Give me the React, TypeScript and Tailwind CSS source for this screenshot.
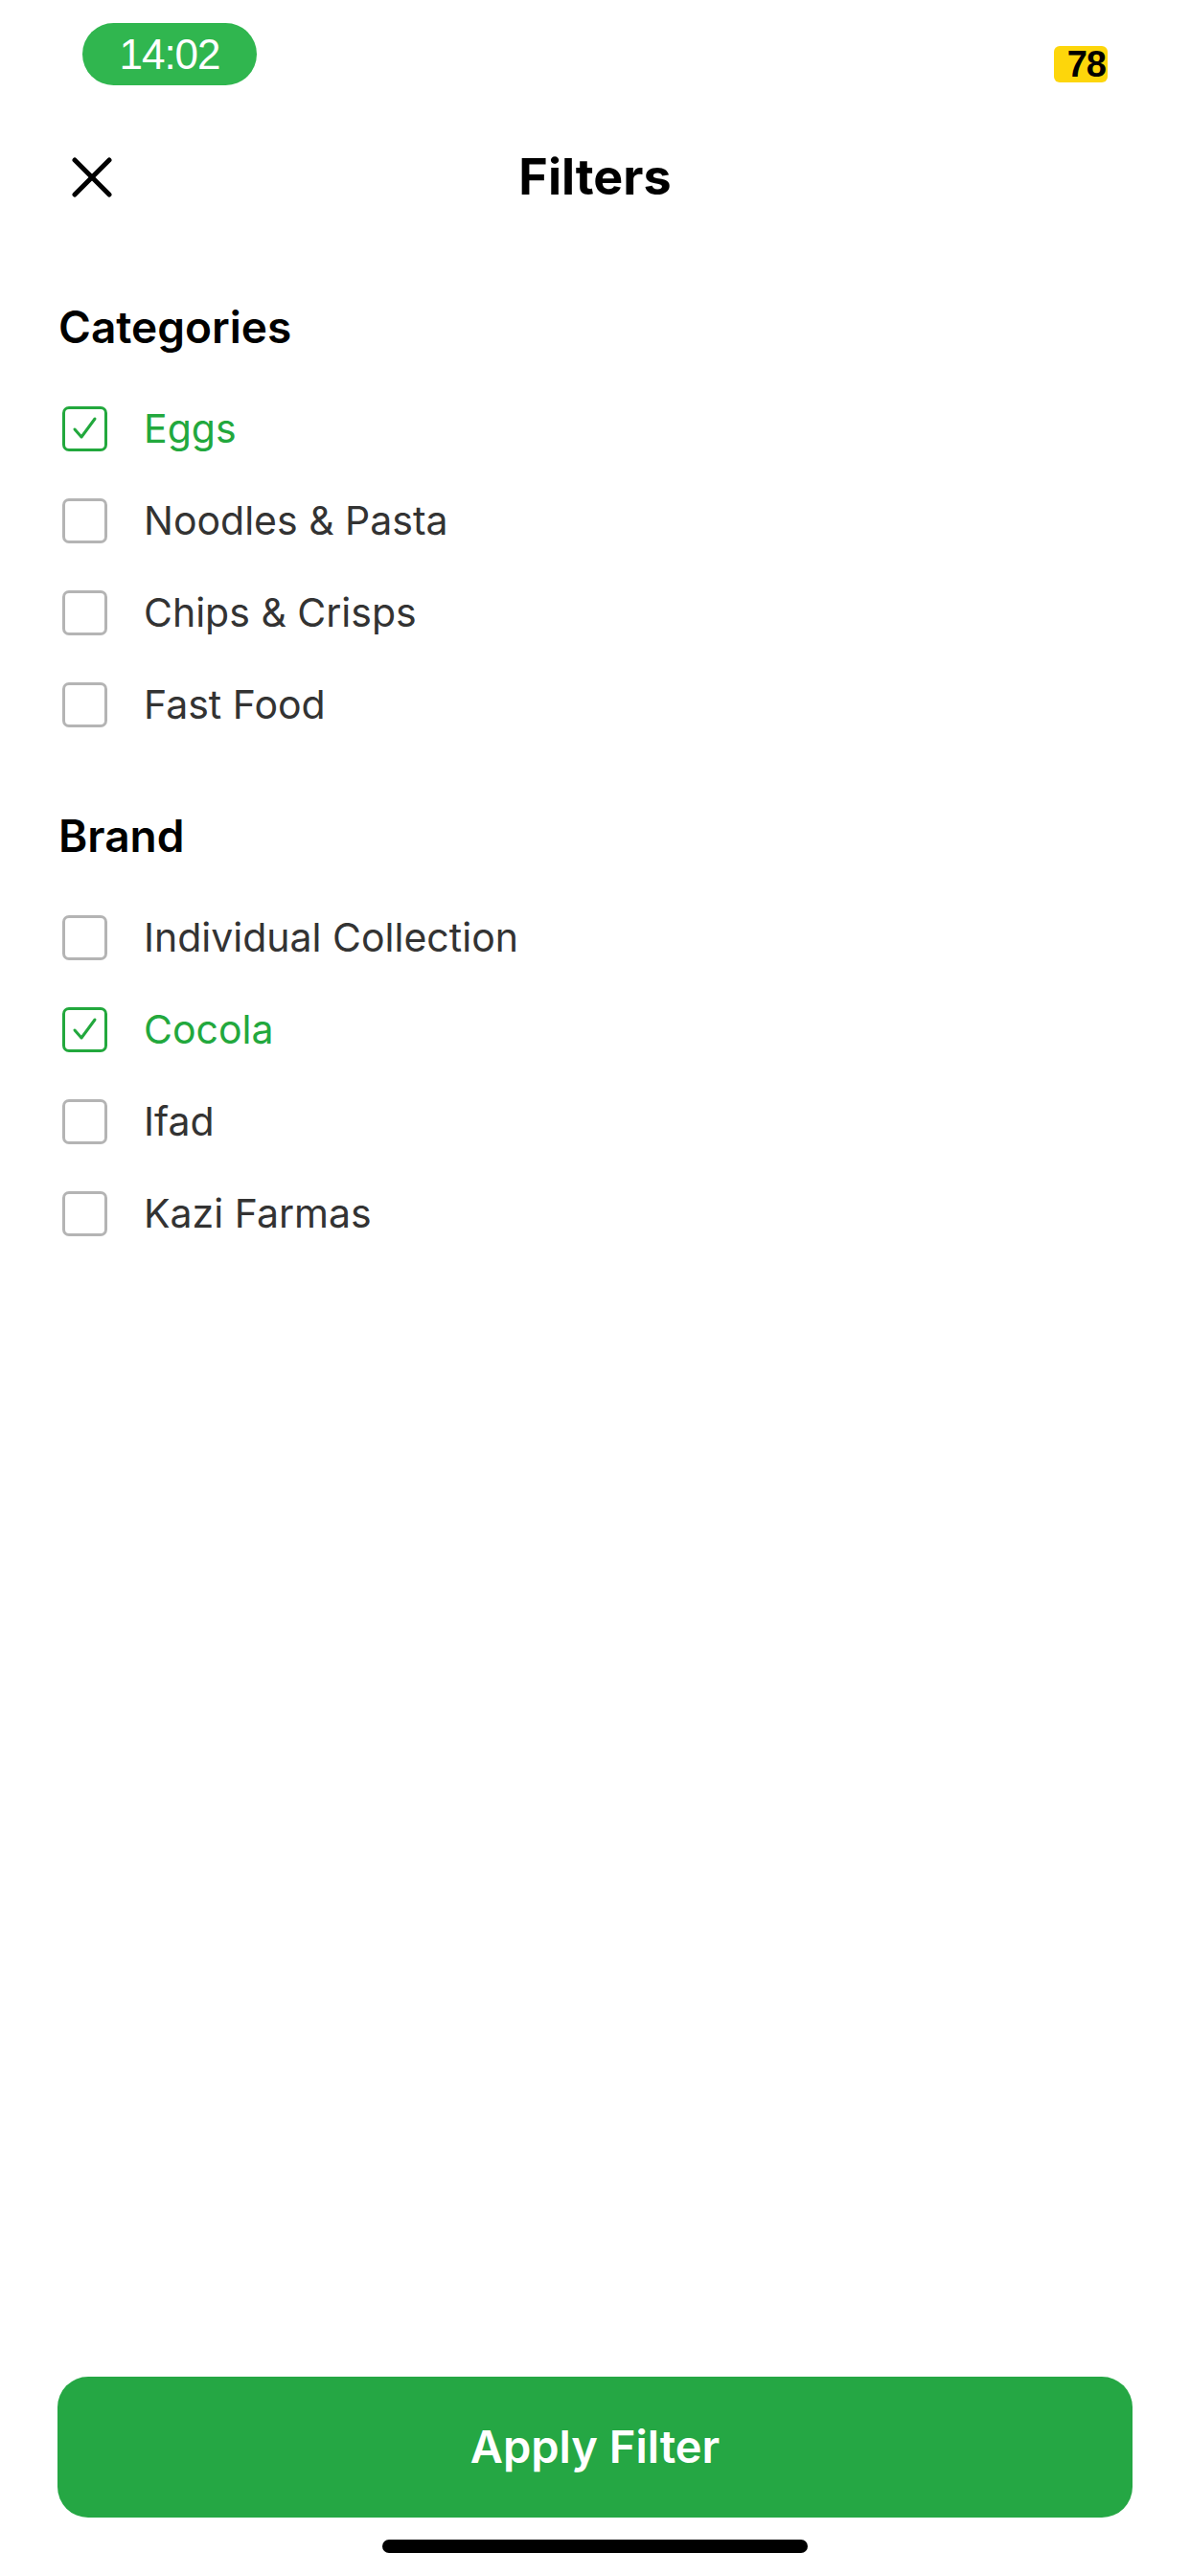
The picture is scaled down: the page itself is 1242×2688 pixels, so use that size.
import { JSX } from "react";

type Option = { label: string; checked: boolean };

const categories: Option[] = [
    { label: "Eggs", checked: true },
    { label: "Noodles & Pasta", checked: false },
    { label: "Chips & Crisps", checked: false },
    { label: "Fast Food", checked: false },
];

const brands: Option[] = [
    { label: "Individual Collection", checked: false },
    { label: "Cocola", checked: true },
    { label: "Ifad", checked: false },
    { label: "Kazi Farmas", checked: false },
];

function CheckRow({ label, checked }: Option): JSX.Element {
    return (
        <div className="flex items-center h-[96px]">
            <div
                className={
                    checked
                        ? "ml-[4px] w-[47px] h-[47px] rounded-[7px] border-[3px] border-[#22a83d] flex items-center justify-center"
                        : "ml-[4px] w-[47px] h-[47px] rounded-[7px] border-[3px] border-[#b4b4b4]"
                }
            >
                {checked && (
                    <svg width="32" height="32" viewBox="0 0 32 32" fill="none">
                        <polyline points="5,17 12,25 26,6" stroke="#22a83d" strokeWidth="3" strokeLinecap="round" strokeLinejoin="round" />
                    </svg>
                )}
            </div>
            <span
                className={
                    checked
                        ? "ml-[38px] text-[41px] text-[#22a83d] leading-none"
                        : "ml-[38px] text-[41px] text-[#333333] leading-none"
                }
            >
                {label}
            </span>
        </div>
    );
}

function Section({ title, items, top }: { title: string; items: Option[]; top: string }) {
    return (
        <div className={top}>
            <h2 className="text-[46px] font-semibold text-black leading-[55px] mb-[30px]">{title}</h2>
            {items.map((it) => (
                <CheckRow key={it.label} label={it.label} checked={it.checked} />
            ))}
        </div>
    );
}

export default function App() {
    return (
        <div className="w-[1242px] h-[2688px] bg-white flex flex-col font-['Inter','Noto_Sans',sans-serif]">
            {/* status bar */}
            <div className="h-[130px] flex items-start justify-between px-[86px]">
                <div className="mt-[24px] w-[182px] h-[65px] rounded-full bg-[#30b64f] flex items-center justify-center">
                    <span className="text-white text-[44px] font-medium font-['Liberation_Sans',sans-serif] tracking-[-1px]">14:02</span>
                </div>
                <div className="mt-[48px] w-[56px] h-[38px] rounded-[6px] bg-[#fdd60b] flex items-center justify-end pr-[2px]">
                    <span className="text-black text-[38px] font-bold font-['Liberation_Sans',sans-serif] tracking-[-1px] leading-none">78</span>
                </div>
            </div>

            {/* header */}
            <div className="h-[110px] grid grid-cols-[1fr_auto_1fr] items-center">
                <div className="pl-[75px]">
                    <svg width="42" height="42" viewBox="0 0 42 42" fill="none">
                        <line x1="3" y1="3" x2="39" y2="39" stroke="black" strokeWidth="5" strokeLinecap="round" />
                        <line x1="39" y1="3" x2="3" y2="39" stroke="black" strokeWidth="5" strokeLinecap="round" />
                    </svg>
                </div>
                <h1 className="text-[52px] font-bold text-black">Filters</h1>
                <div />
            </div>

            <div className="pl-[61px]">
                <Section title="Categories" items={categories} top="mt-[74px]" />
                <Section title="Brand" items={brands} top="mt-[62px]" />
            </div>

            <div className="flex-1" />

            <div className="px-[60px]">
                <button className="w-full h-[147px] rounded-[32px] bg-[#25a744] text-white text-[47px] font-semibold">
                    Apply Filter
                </button>
            </div>
            <div className="flex justify-center pt-[23px] pb-[24px]">
                <div className="w-[444px] h-[14px] rounded-full bg-black" />
            </div>
        </div>
    );
}
